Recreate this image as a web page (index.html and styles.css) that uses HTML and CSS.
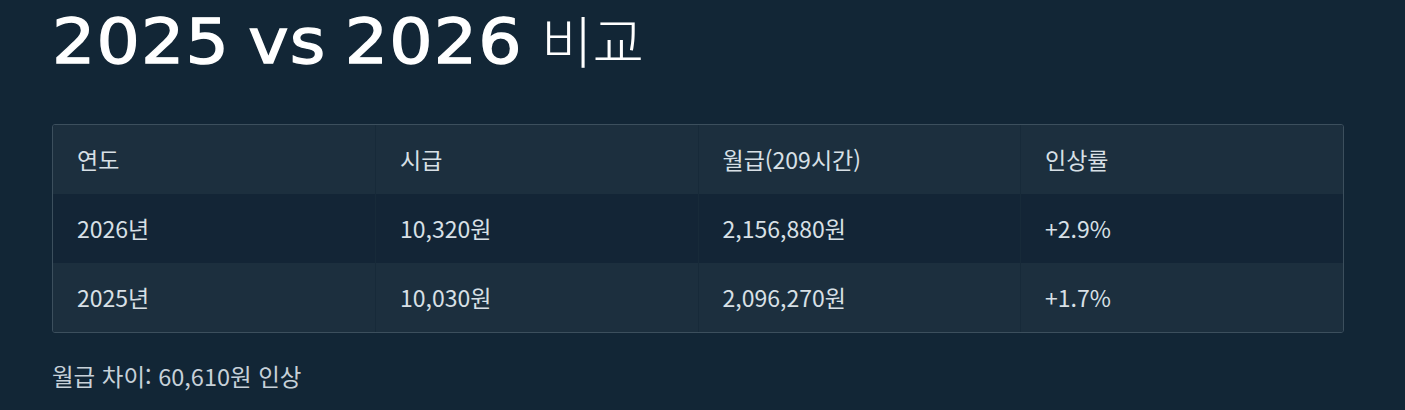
FILE: index.html
```html
<!DOCTYPE html>
<html lang="ko">
<head>
<meta charset="utf-8">
<link rel="stylesheet" href="styles.css">
</head>
<body>
<main class="page">
  <h1 class="title"><span class="title-num">2025 vs 2026</span><span class="title-ko">비교</span></h1>
  <div class="table-wrap">
    <table class="compare">
      <thead>
        <tr><th>연도</th><th>시급</th><th>월급(209시간)</th><th>인상률</th></tr>
      </thead>
      <tbody>
        <tr class="row-dark"><td>2026년</td><td>10,320원</td><td>2,156,880원</td><td>+2.9%</td></tr>
        <tr class="row-light"><td>2025년</td><td>10,030원</td><td>2,096,270원</td><td>+1.7%</td></tr>
      </tbody>
    </table>
  </div>
  <p class="note">월급 차이: 60,610원 인상</p>
</main>
</body>
</html>
```
FILE: styles.css
```css
html, body {
  margin: 0;
  padding: 0;
  background: #122636;
}
body {
  font-family: "Noto Sans CJK KR", "Noto Sans", sans-serif;
  color: #d8e0e6;
}
.page {
  padding: 0 61px 0 52px;
}
.title {
  margin: 0;
  padding-top: 3px;
  height: 124px;
  box-sizing: border-box;
  font-weight: normal;
  color: #ffffff;
  line-height: 72px;
  white-space: nowrap;
}
.title-num {
  display: inline-block;
  font-family: "DejaVu Sans", sans-serif;
  font-weight: normal;
  font-size: 62px;
  letter-spacing: 1px;
  word-spacing: -4px;
  -webkit-text-stroke: 1.3px #ffffff;
  transform: scaleX(1.1);
  transform-origin: left center;
}
.title-ko {
  font-family: "Noto Sans CJK KR", sans-serif;
  font-weight: 300;
  font-size: 56px;
  margin-left: 61px;
}
.table-wrap {
  border: 1px solid #3c4f5d;
  border-radius: 3px;
  overflow: hidden;
}
.compare {
  width: 100%;
  border-collapse: collapse;
  table-layout: fixed;
}
.compare th, .compare td {
  text-align: left;
  font-weight: normal;
  font-size: 23px;
  line-height: 33px;
  padding: 18px 24px;
  border-left: 1px solid #172a39;
}
.compare th:first-child, .compare td:first-child {
  border-left: none;
}
.compare thead tr {
  background: #1c2f3e;
}
.row-dark {
  background: #132536;
}
.row-light {
  background: #1c2f3e;
}
.note {
  margin: 27px 0 0;
  font-size: 23.5px;
  line-height: 33px;
  color: #c7d1d9;
}
```
